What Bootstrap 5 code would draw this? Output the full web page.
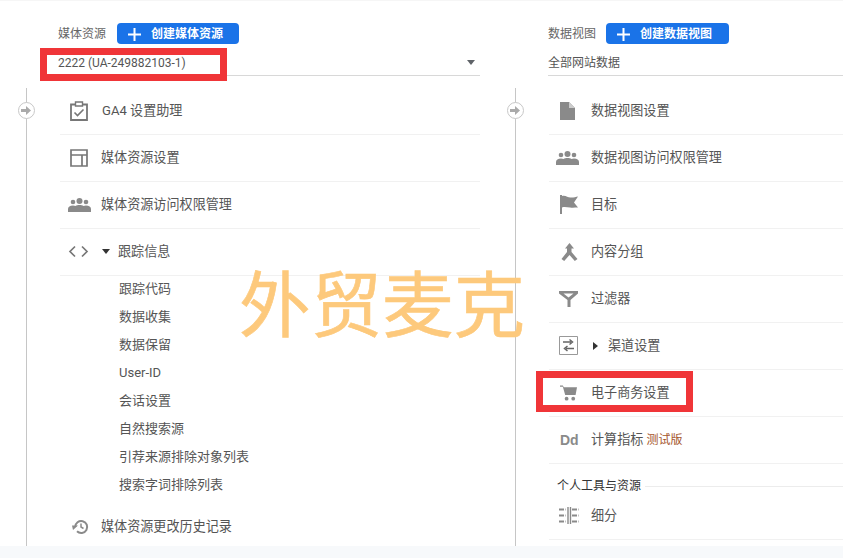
<!doctype html>
<html lang="zh">
<head>
<meta charset="utf-8">
<title>管理</title>
<link href="https://cdn.jsdelivr.net/npm/bootstrap@5.3.0/dist/css/bootstrap.min.css" rel="stylesheet">
<style>
html,body{margin:0;height:558px;overflow:hidden;background:#f7f9fb}
body{font-family:Roboto,"Noto Sans CJK SC",sans-serif;font-size:13px;color:#555}
.page-area{position:relative;height:546px;background:#fff;overflow:hidden;border-top:1px solid #f6f6f6}
.col-prop{width:489px;flex:none}
.col-view{flex:1;min-width:0}
.head-prop{padding:0 9px 0 58px}
.col-view .head-prop{padding:0 0 0 59px}
.label-row{height:44px;padding-top:22px;gap:11px;font-size:12px;color:#666}
.col-view .label-row{gap:10px}
.add-btn{background:#1a73e8;border:0;border-radius:4px;height:21px;width:122px;padding:1px 0 0 10px;color:#fff;font-size:12px;font-weight:700;display:flex;align-items:center;gap:9px;--bs-btn-hover-bg:#1a73e8}
.col-view .add-btn{width:123px}
.pick-row{height:31px;border-bottom:1px solid #d8d8d8;font-size:12px;color:#555;padding-top:5px}
.caret-down{width:0;height:0;border-left:4.5px solid transparent;border-right:4.5px solid transparent;border-top:5px solid #5f6368;margin-right:5px}
.rail{position:relative;margin:12px 0 0 26px;border-left:1px solid #c6c6c6;padding-left:33px;padding-right:9px;height:470px}
.col-view .rail{padding-right:0}
.rail-dot{position:absolute;left:-9px;top:14px;width:17px;height:17px;border-radius:50%;background:#fff;border:1px solid #c8c8c8;display:flex;align-items:center;justify-content:center}
.entry{height:47px;border-bottom:1px solid #f1f1f1;display:flex;align-items:center;color:#555;font-size:13.1px;padding-bottom:1px}
.entry.flat{border-bottom:0}
.entry.last-row{height:43px;padding-bottom:5px}
.ico{width:42px;flex:none;display:flex;justify-content:flex-start;padding-left:8px}
.col-prop .ico{width:41px}
.col-prop .ico.wide-ico{width:42px}
.ico svg{display:block}
.pad-10{padding-left:10px}
.pad-11{padding-left:11px}
.pad-12{padding-left:12px}
.pad-7{padding-left:7px}
.tri-down{width:0;height:0;border-left:4.5px solid transparent;border-right:4.5px solid transparent;border-top:5px solid #333;margin-right:8px}
.tri-right{width:0;height:0;border-top:4.5px solid transparent;border-bottom:4.5px solid transparent;border-left:5px solid #333;margin:0 10px 0 2px}
.sub-list{padding:0 0 4px 59px;margin:0;list-style:none}
.sub-list li{height:28px;line-height:26px;font-size:13px;color:#555;white-space:nowrap}
.beta-tag{color:#a5552c;font-size:12px;margin-left:3px}
.sec-head{height:22px;margin:11px 0 0 8px;font-size:12px;color:#333;display:flex;align-items:center;gap:4px}
.sec-head i{flex:1;border-top:1px solid #ececec;display:block}
.dd-ico{font-family:"Liberation Sans",sans-serif;font-weight:700;font-size:14px;color:#8a8a8a;line-height:1}
.stamp{position:absolute;left:239px;top:257px;font-family:"Noto Sans CJK SC",sans-serif;font-size:71.500px;font-weight:400;-webkit-text-stroke:.6px #fdc97c;line-height:1.2;color:#fdc97c;white-space:nowrap;pointer-events:none}
.red-box{position:absolute;border:7px solid #f03538;pointer-events:none}
.box-a{left:40px;top:47px;width:187px;height:33px}
.box-b{left:536px;top:370px;width:157px;height:41px}
.foot-strip{height:12px;background:#f7f9fb}
.label-text{line-height:23px}
</style>
</head>
<body>
<div class="page-area d-flex">
  <section class="col-prop">
    <div class="head-prop">
      <div class="label-row d-flex align-items-start">
        <span class="label-text">媒体资源</span>
        <button class="btn add-btn" type="button"><svg width="15" height="15" viewBox="0 0 15 15"><path d="M6.500 1h2v5.500H14v2H8.500V14h-2V8.500H1v-2h5.500z" fill="#fff"/></svg>创建媒体资源</button>
      </div>
      <div class="pick-row d-flex align-items-center justify-content-between"><span>2222 (UA-249882103-1)</span><span class="caret-down"></span></div>
    </div>
    <div class="rail">
      <span class="rail-dot"><svg width="11" height="9" viewBox="0 0 11 9"><path d="M0 3h5V0l5 4.500L5 9V6H0z" fill="#aaa"/></svg></span>
      <div class="entry"><span class="ico wide-ico pad-10"><svg width="18" height="20" viewBox="0 0 18 20"><path d="M1 3.500h16V19H1z" fill="none" stroke="#777" stroke-width="1.800"/><path d="M5.500 1h7v4h-7z" fill="#fff" stroke="#777" stroke-width="1.400"/><path d="M4.500 11.500l3 3 6-6" fill="none" stroke="#777" stroke-width="1.600"/></svg></span>GA4 设置助理</div>
      <div class="entry"><span class="ico pad-10"><svg width="18" height="18" viewBox="0 0 18 18"><path d="M1 1h16v16H1zM1 6h16M12 6v11" fill="none" stroke="#777" stroke-width="1.700"/></svg></span>媒体资源设置</div>
      <div class="entry"><span class="ico"><svg width="23" height="14" viewBox="0 0 23 14"><g fill="#8a8a8a"><circle cx="11.500" cy="3" r="3"/><circle cx="5" cy="4" r="2.300"/><circle cx="18" cy="4" r="2.300"/><path d="M0 14v-3c0-2 2-3.500 5-3.500 1 0 2 .2 2.500.5 1-.7 2.500-1 4-1s3 .3 4 1c.5-.3 1.500-.5 2.500-.5 3 0 5 1.500 5 3.500v3z"/></g></svg></span>媒体资源访问权限管理</div>
      <div class="entry"><span class="ico wide-ico"><svg width="21" height="13" viewBox="0 0 21 13"><path d="M7 1.500 2 6.500l5 5M14 1.500l5 5-5 5" fill="none" stroke="#777" stroke-width="1.700"/></svg></span><span class="tri-down"></span>跟踪信息</div>
      <ul class="sub-list">
        <li>跟踪代码</li><li>数据收集</li><li>数据保留</li><li>User-ID</li><li>会话设置</li><li>自然搜索源</li><li>引荐来源排除对象列表</li><li>搜索字词排除列表</li>
      </ul>
      <div class="entry flat"><span class="ico pad-12"><svg width="17" height="16" viewBox="0 0 17 16"><path d="M3.200 8a6 6 0 1 1 1.800 4.300" fill="none" stroke="#8a8a8a" stroke-width="2"/><path d="M0 6.500h6L1 11z" fill="#8a8a8a"/><path d="M9 4.500V8l2.500 1.500" fill="none" stroke="#8a8a8a" stroke-width="1.500"/></svg></span>媒体资源更改历史记录</div>
    </div>
  </section>
  <section class="col-view">
    <div class="head-prop">
      <div class="label-row d-flex align-items-start">
        <span class="label-text">数据视图</span>
        <button class="btn add-btn" type="button"><svg width="15" height="15" viewBox="0 0 15 15"><path d="M6.500 1h2v5.500H14v2H8.500V14h-2V8.500H1v-2h5.500z" fill="#fff"/></svg>创建数据视图</button>
      </div>
      <div class="pick-row d-flex align-items-center"><span>全部网站数据</span></div>
    </div>
    <div class="rail">
      <span class="rail-dot"><svg width="11" height="9" viewBox="0 0 11 9"><path d="M0 3h5V0l5 4.500L5 9V6H0z" fill="#aaa"/></svg></span>
      <div class="entry"><span class="ico pad-11"><svg width="15" height="18" viewBox="0 0 15 18"><path d="M0 0h9l6 6v12H0z" fill="#8a8a8a"/><path d="M9 0v6h6z" fill="#ccc"/></svg></span>数据视图设置</div>
      <div class="entry"><span class="ico pad-7"><svg width="23" height="14" viewBox="0 0 23 14"><g fill="#8a8a8a"><circle cx="11.500" cy="3" r="3"/><circle cx="5" cy="4" r="2.300"/><circle cx="18" cy="4" r="2.300"/><path d="M0 14v-3c0-2 2-3.500 5-3.500 1 0 2 .2 2.500.5 1-.7 2.500-1 4-1s3 .3 4 1c.5-.3 1.500-.5 2.500-.5 3 0 5 1.500 5 3.500v3z"/></g></svg></span>数据视图访问权限管理</div>
      <div class="entry"><span class="ico pad-11"><svg width="18" height="19" viewBox="0 0 18 19"><path d="M0 0h2v19H0z" fill="#8a8a8a"/><path d="M2 1c4-1 6 2 9 1.500 3 0 5-.5 7-1l-4 6 4 5c-3 0-5 .5-8 0-3 0-5-1-8 0z" fill="#8a8a8a"/></svg></span>目标</div>
      <div class="entry"><span class="ico pad-12"><svg width="17" height="18" viewBox="0 0 17 18"><path d="M8.500 0 13 5.500h-2.500V9l6 7-2.700 2-5.300-6-5.300 6L.5 16l5.500-7V5.500H4z" fill="#8a8a8a"/></svg></span>内容分组</div>
      <div class="entry"><span class="ico pad-10"><svg width="19" height="16" viewBox="0 0 19 16"><path d="M0 0h19v2.500l-7.500 6.500v7h-3V9L0 2.500zM4.500 2.500 9.500 6.500l5-4z" fill="#8a8a8a" fill-rule="evenodd"/></svg></span>过滤器</div>
      <div class="entry"><span class="ico pad-10"><svg width="19" height="19" viewBox="0 0 19 19"><path d="M.5.500h18v18H.500z" fill="none" stroke="#999"/><path d="M4 6h8M10.500 3.500 13.500 6l-3 2.500M15 12.500H7M8.500 10 5.500 12.500 8.500 15" fill="none" stroke="#666" stroke-width="1.500"/></svg></span><span class="tri-right"></span>渠道设置</div>
      <div class="entry"><span class="ico pad-11"><svg width="17" height="16" viewBox="0 0 18 16"><path d="M0 0h3l1 2h14l-1.500 8H5.500L3 1.500H0z" fill="#8a8a8a"/><circle cx="7" cy="14" r="2" fill="#8a8a8a"/><circle cx="14" cy="14" r="2" fill="#8a8a8a"/></svg></span>电子商务设置</div>
      <div class="entry"><span class="ico dd-ico pad-11">Dd</span>计算指标<span class="beta-tag">测试版</span></div>
      <div class="sec-head"><span>个人工具与资源</span><i></i></div>
      <div class="entry last-row"><span class="ico pad-10"><svg width="20" height="17" viewBox="0 0 20 17"><path d="M9 0v17M11.500 0v17" stroke="#8a8a8a" stroke-width="1.400" fill="none"/><path d="M0 2.500h7M0 8.500h7M0 14.500h7M13 2.500h7M13 8.500h7M13 14.500h7" stroke="#8a8a8a" stroke-width="1.800" stroke-dasharray="5 1.500" fill="none"/></svg></span>细分</div>
    </div>
  </section>
  <div class="stamp">外贸麦克</div>
  <div class="red-box box-a"></div>
  <div class="red-box box-b"></div>
</div>
<div class="foot-strip"></div>
<script src="https://cdn.jsdelivr.net/npm/bootstrap@5.3.0/dist/js/bootstrap.bundle.min.js"></script>
</body>
</html>
